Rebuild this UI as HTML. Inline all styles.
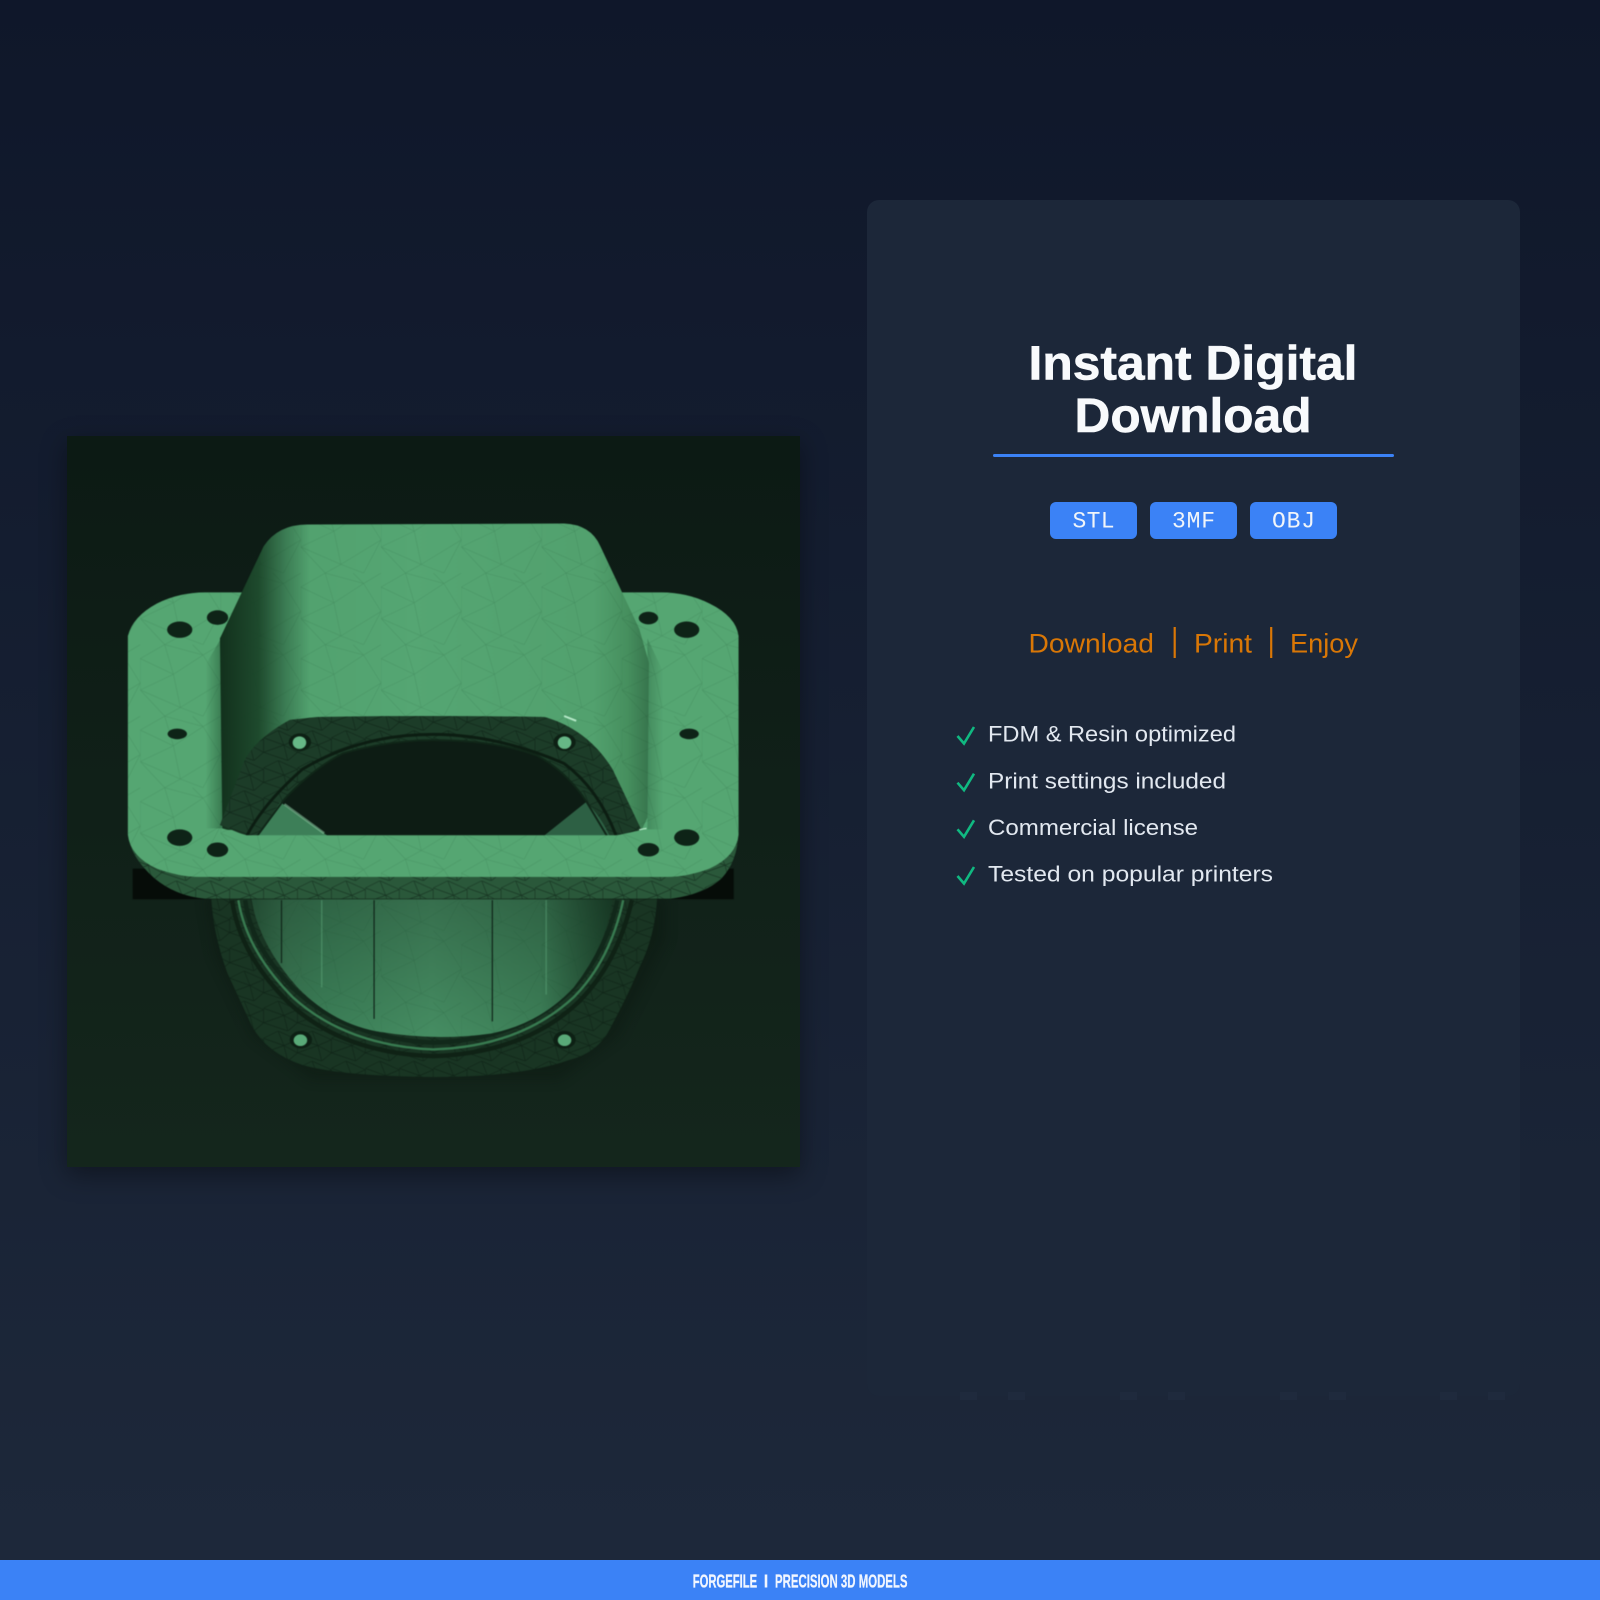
<!DOCTYPE html>
<html lang="en">
<head>
<meta charset="utf-8">
<title>ForgeFile – Instant Digital Download</title>
<style>
html,body{margin:0;padding:0;width:1600px;height:1600px;overflow:hidden}
body{position:relative;background:linear-gradient(180deg,#0f172a 0%,#1e293b 103%);font-family:"Liberation Sans",sans-serif}
.panel{position:absolute;left:67px;top:436px;width:733px;height:731px;background:linear-gradient(180deg,#0c1a14,#14261c);box-shadow:0 8px 24px rgba(0,0,0,.38)}
.model{position:absolute;left:60px;top:430px;width:760px;height:760px;filter:blur(.4px)}
.card{position:absolute;left:867px;top:200px;width:653px;height:1196px;border-radius:12px;background:#1c2739}
.rule{position:absolute;left:993px;top:453.5px;width:401px;height:3px;border-radius:2px;background:#3b82f6}
.badge{position:absolute;top:502px;width:87px;height:36.5px;border-radius:6px;background:#3b82f6}
.dot{position:absolute;top:1392px;width:17px;height:8px;background:#1f2a3d}
.foot{position:absolute;left:0;top:1560px;width:1600px;height:40px;background:#3b82f6}
.text{position:absolute;left:0;top:0;width:1600px;height:1600px}
</style>
</head>
<body>
<div class="panel"></div>
<svg class="model" viewBox="0 0 1568 1568" xmlns="http://www.w3.org/2000/svg">
<defs>
<linearGradient id="hood" x1="330" y1="0" x2="1215" y2="0" gradientUnits="userSpaceOnUse">
<stop offset="0" stop-color="#12301c"/><stop offset=".09" stop-color="#1e4a2d"/><stop offset=".15" stop-color="#3a7a52"/><stop offset=".21" stop-color="#52a26f"/><stop offset=".45" stop-color="#55a673"/><stop offset=".87" stop-color="#52a16e"/><stop offset=".95" stop-color="#468f5e"/><stop offset="1" stop-color="#37754d"/>
</linearGradient>
<linearGradient id="tube" x1="395" y1="0" x2="1140" y2="0" gradientUnits="userSpaceOnUse">
<stop offset="0" stop-color="#2c5f40"/><stop offset=".1" stop-color="#3a7853"/><stop offset=".2" stop-color="#3c8058"/><stop offset=".5" stop-color="#468e63"/><stop offset=".8" stop-color="#3d8058"/><stop offset="1" stop-color="#1d462d"/>
</linearGradient>
<linearGradient id="tubev" x1="0" y1="970" x2="0" y2="1260" gradientUnits="userSpaceOnUse">
<stop offset="0" stop-color="#000" stop-opacity=".22"/><stop offset="1" stop-color="#000" stop-opacity="0"/>
</linearGradient>
<linearGradient id="seamL" x1="300" y1="0" x2="335" y2="0" gradientUnits="userSpaceOnUse">
<stop offset="0" stop-color="#0f3a20" stop-opacity="0"/><stop offset="1" stop-color="#0f3a20" stop-opacity=".4"/>
</linearGradient>
<linearGradient id="seamR" x1="1245" y1="0" x2="1212" y2="0" gradientUnits="userSpaceOnUse">
<stop offset="0" stop-color="#0f3a20" stop-opacity="0"/><stop offset="1" stop-color="#0f3a20" stop-opacity=".25"/>
</linearGradient>
<pattern id="mesh" width="230" height="205" patternUnits="userSpaceOnUse" patternTransform="scale(.72)">
<path d="M0 40L70 0L95 85L0 40M70 0L180 30L95 85L115 180L0 130L0 40M95 85L0 130M180 30L230 110L115 180L95 85M230 110L180 205M115 180L180 205L230 110M115 180L70 205M0 130L70 205M180 30L230 0M180 30L150 0" fill="none" stroke="#0d3a20" stroke-opacity=".17" stroke-width="1.6"/>
</pattern>
<pattern id="meshd" width="70" height="62" patternUnits="userSpaceOnUse">
<path d="M0 15L30 0L42 30L0 15M30 0L70 18L42 30L50 62L0 45L0 15M42 30L0 45M42 30L70 45L50 62M70 18L70 45" fill="none" stroke="#06140b" stroke-opacity=".5" stroke-width="1.4"/>
</pattern>
<clipPath id="c1"><path d="M140 425Q150 385 200 358Q245 335 300 335H1240Q1295 335 1340 358Q1395 385 1400 425V835Q1395 880 1340 905Q1295 922 1250 922H290Q245 922 200 905Q145 880 140 835Z"/></clipPath>
</defs>

<!-- shadow around body -->
<path d="M300 965L320 1080L400 1250L520 1340H1030L1150 1250L1250 1050L1250 965Z" fill="#0a160e" opacity=".35" filter="blur(12px)"/>

<!-- lower flange -->
<path d="M312 965Q316 1040 345 1120L395 1228Q425 1285 500 1310Q580 1333 770 1335Q950 1335 1050 1300Q1110 1285 1135 1235Q1175 1160 1195 1110Q1228 1045 1232 965Z" fill="#193523"/>
<path d="M312 965Q316 1040 345 1120L395 1228Q425 1285 500 1310Q580 1333 770 1335Q950 1335 1050 1300Q1110 1285 1135 1235Q1175 1160 1195 1110Q1228 1045 1232 965Z" fill="url(#meshd)"/>
<!-- rings -->
<path d="M355 970Q370 1080 470 1180Q580 1285 770 1292Q960 1285 1070 1180Q1150 1100 1180 970" fill="none" stroke="#0f2215" stroke-width="9"/>
<path d="M368 970Q385 1075 480 1170Q590 1270 770 1278Q950 1272 1060 1170Q1135 1095 1162 970" fill="none" stroke="#387a50" stroke-width="5"/>
<path d="M382 970Q395 1070 490 1160Q600 1256 770 1264Q945 1258 1050 1160Q1125 1085 1150 970" fill="none" stroke="#11281a" stroke-width="9"/>
<!-- tube -->
<path d="M395 968H1140Q1130 1060 1060 1150Q990 1225 890 1245Q770 1262 650 1240Q560 1222 490 1150Q410 1060 395 968Z" fill="url(#tube)"/>
<path d="M395 968H1140Q1130 1060 1060 1150Q990 1225 890 1245Q770 1262 650 1240Q560 1222 490 1150Q410 1060 395 968Z" fill="url(#tubev)"/>
<path d="M395 968H1140Q1130 1060 1060 1150Q990 1225 890 1245Q770 1262 650 1240Q560 1222 490 1150Q410 1060 395 968Z" fill="url(#mesh)"/>
<path d="M457 970V1100M648 970V1215M892 970V1220" stroke="#10261a" stroke-width="2.5" fill="none"/>
<path d="M540 970V1150M1003 970V1165" stroke="#6cbc8b" stroke-opacity=".35" stroke-width="3" fill="none"/>
<!-- lower holes -->
<ellipse cx="497" cy="1258" rx="23" ry="18" fill="#0d2014"/><ellipse cx="496" cy="1259" rx="14" ry="12" fill="#59aa78"/>
<ellipse cx="1041" cy="1258" rx="23" ry="18" fill="#0d2014"/><ellipse cx="1041" cy="1259" rx="14" ry="12" fill="#59aa78"/>

<!-- black block under flange -->
<rect x="150" y="905" width="1240" height="63" fill="#060c08"/>

<!-- flange edge -->
<path d="M140 830Q143 880 195 925Q240 962 300 967H1260Q1330 958 1365 925Q1398 890 1400 830Z" fill="#2a583a"/>
<path d="M140 830Q143 880 195 925Q240 962 300 967H1260Q1330 958 1365 925Q1398 890 1400 830Z" fill="url(#meshd)"/>
<!-- flange top -->
<path d="M140 425Q150 385 200 358Q245 335 300 335H1240Q1295 335 1340 358Q1395 385 1400 425V835Q1395 880 1340 905Q1295 922 1250 922H290Q245 922 200 905Q145 880 140 835Z" fill="#55a672"/>
<path d="M140 425Q150 385 200 358Q245 335 300 335H1240Q1295 335 1340 358Q1395 385 1400 425V835Q1395 880 1340 905Q1295 922 1250 922H290Q245 922 200 905Q145 880 140 835Z" fill="url(#mesh)"/>
<path d="M335 425L300 485V825H335Z" fill="url(#seamL)"/>
<path d="M1212 430L1245 500V825H1212Z" fill="url(#seamR)"/>

<!-- hood -->
<path d="M330 430L420 240Q450 195 510 195L1040 193Q1095 195 1115 240L1195 410L1215 480L1212 800L1200 825L335 825Z" fill="url(#hood)"/>
<path d="M330 430L420 240Q450 195 510 195L1040 193Q1095 195 1115 240L1195 410L1215 480L1212 800L1200 825L335 825Z" fill="url(#mesh)"/>
<!-- hood front face -->
<path d="M330 815L378 688Q398 640 474 598L530 592Q760 588 1000 592Q1090 618 1140 700L1200 826L1145 838H385Z" fill="#1c3c28"/>
<path d="M330 815L378 688Q398 640 474 598L530 592Q760 588 1000 592Q1090 618 1140 700L1200 826L1145 838H385Z" fill="url(#meshd)"/>
<!-- ring groove -->
<path d="M385 838Q420 770 500 700Q620 628 770 628Q900 628 1040 688Q1110 740 1147 836" fill="none" stroke="#0c1d12" stroke-width="6"/>

<!-- opening -->
<path d="M405 840L462 763Q520 700 584 667Q680 640 770 640Q900 640 985 672Q1045 705 1085 765L1130 840Z" fill="#0d1c14"/>
<path d="M405 840L455 768L556 840Z" fill="#3d7f58"/>
<path d="M463 772L545 832" stroke="#8fcfa6" stroke-opacity=".55" stroke-width="5" fill="none"/>
<path d="M1135 840H995L1085 768Q1115 795 1135 840Z" fill="#2d6044"/>
<path d="M405 840L462 763Q520 700 584 667Q680 640 770 640Q900 640 985 672Q1045 705 1085 765L1130 840" fill="none" stroke="#102618" stroke-width="4"/>
<path d="M1040 590L1065 600" stroke="#b7eac9" stroke-width="4"/>
<path d="M1195 825L1210 822" stroke="#b7eac9" stroke-width="3"/>

<!-- front strip of flange -->
<g clip-path="url(#c1)">
<path d="M335 822L385 836H1150L1205 824H1300V930H240V822Z" fill="#55a672"/>
<path d="M335 822L385 836H1150L1205 824H1300V930H240V822Z" fill="url(#mesh)"/>
</g>

<!-- face holes -->
<ellipse cx="495" cy="644" rx="23" ry="18" fill="#0d2014"/><ellipse cx="494" cy="645" rx="14" ry="13" fill="#66b786"/>
<ellipse cx="1041" cy="644" rx="23" ry="18" fill="#0d2014"/><ellipse cx="1041" cy="645" rx="14" ry="13" fill="#66b786"/>

<!-- flange holes -->
<g fill="#0e2317">
<ellipse cx="247" cy="412" rx="26" ry="17"/><ellipse cx="325" cy="387" rx="22" ry="15"/><ellipse cx="242" cy="627" rx="20" ry="11"/><ellipse cx="247" cy="841" rx="26" ry="17"/><ellipse cx="325" cy="866" rx="22" ry="15"/>
<ellipse cx="1293" cy="412" rx="26" ry="17"/><ellipse cx="1214" cy="388" rx="20" ry="13"/><ellipse cx="1298" cy="627" rx="20" ry="11"/><ellipse cx="1293" cy="841" rx="26" ry="17"/><ellipse cx="1214" cy="866" rx="22" ry="14"/>
</g>
</svg>

<div class="card"></div>
<div class="rule"></div>
<div class="badge" style="left:1050px"></div>
<div class="badge" style="left:1150px"></div>
<div class="badge" style="left:1250px"></div>
<div class="dot" style="left:960px"></div><div class="dot" style="left:1008px"></div>
<div class="dot" style="left:1120px"></div><div class="dot" style="left:1168px"></div>
<div class="dot" style="left:1280px"></div><div class="dot" style="left:1329px"></div>
<div class="dot" style="left:1440px"></div><div class="dot" style="left:1488px"></div>
<div class="foot"></div>

<svg class="text" viewBox="0 0 1600 1600" xmlns="http://www.w3.org/2000/svg" font-family="'Liberation Sans',sans-serif">
<g font-size="48" font-weight="700" fill="#f8fafc" stroke="#f8fafc" stroke-width=".6">
<text x="1028.5" y="379.5" textLength="329" lengthAdjust="spacingAndGlyphs">Instant Digital</text>
<text x="1074.5" y="432" textLength="237" lengthAdjust="spacingAndGlyphs">Download</text>
</g>
<g font-family="'Liberation Mono',monospace" font-size="23" fill="#f1f5f9">
<text x="1072.5" y="527.5" textLength="42" lengthAdjust="spacing">STL</text>
<text x="1172" y="527.5" textLength="43" lengthAdjust="spacing">3MF</text>
<text x="1272" y="527.5" textLength="43" lengthAdjust="spacing">OBJ</text>
</g>
<g font-size="27" fill="#d97706">
<text x="1028.5" y="652.5" textLength="125.5" lengthAdjust="spacingAndGlyphs">Download</text>
<text x="1194" y="652.5" textLength="58" lengthAdjust="spacingAndGlyphs">Print</text>
<text x="1290" y="652.5" textLength="68" lengthAdjust="spacingAndGlyphs">Enjoy</text>
</g>
<path d="M1174.7 627V658M1271.2 627V658" stroke="#d97706" stroke-width="2.2"/>
<g font-size="22" fill="#e2e8f0">
<text x="988" y="741.7" textLength="248" lengthAdjust="spacingAndGlyphs">FDM &amp; Resin optimized</text>
<text x="988" y="788.3" textLength="238" lengthAdjust="spacingAndGlyphs">Print settings included</text>
<text x="988" y="835" textLength="210" lengthAdjust="spacingAndGlyphs">Commercial license</text>
<text x="988" y="881.7" textLength="285" lengthAdjust="spacingAndGlyphs">Tested on popular printers</text>
</g>
<g fill="none" stroke="#10b981" stroke-width="2.6">
<path d="M957.5 736L964 743.5L974 727"/>
<path d="M957.5 782.7L964 790.2L974 773.7"/>
<path d="M957.5 829.3L964 836.8L974 820.3"/>
<path d="M957.5 876L964 883.5L974 867"/>
</g>
<g font-family="'Liberation Sans Narrow','Liberation Sans',sans-serif" font-size="18" font-weight="700" fill="#f1f6ff" stroke="#f1f6ff" stroke-width=".25">
<text x="692.7" y="1587.3" textLength="64.5" lengthAdjust="spacingAndGlyphs">FORGEFILE</text>
<text x="775" y="1587.3" textLength="132.5" lengthAdjust="spacingAndGlyphs">PRECISION 3D MODELS</text>
</g>
<path d="M766 1574.5V1587.5" stroke="#f1f6ff" stroke-width="2.6"/>
</svg>
</body>
</html>
